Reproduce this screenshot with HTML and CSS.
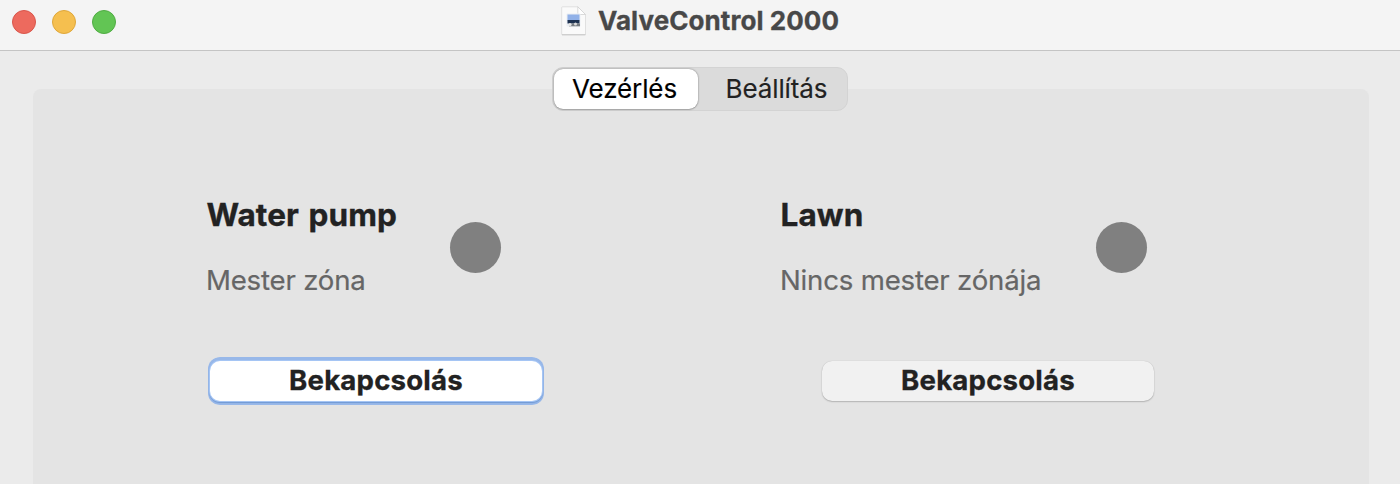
FILE: index.html
```html
<!DOCTYPE html>
<html lang="hu">
<head>
<meta charset="utf-8">
<title>ValveControl 2000</title>
<link rel="stylesheet" href="styles.css">
</head>
<body>
<div class="window">
  <header class="titlebar">
    <div class="lights"><i class="light close"></i><i class="light min"></i><i class="light max"></i></div>
    <div class="title">
      <svg class="doc" width="26" height="30" viewBox="0 0 26 30">
        <path d="M1.5 .8h15.3l7.7 7.7v19.7q0 .8-.8.8H1.5q-.8 0-.8-.8V1.6q0-.8.8-.8z" fill="#fafafa" stroke="#d9d9d9" stroke-width=".8"/>
        <path d="M1 28.7h23.5" stroke="#c8c8c8"/>
        <path d="M16.8.8l7.7 7.7h-6.7q-1 0-1-1z" fill="#fff" stroke="#d0d0d0" stroke-width=".8"/>
        <rect x="5.5" y="7.5" width="14" height="13" rx="1" fill="#e9edf3"/>
        <rect x="6.5" y="8.5" width="12" height="6" fill="#91b1e8"/>
        <path d="M6.5 14h12v3.5h-12z" fill="#1d3150"/>
        <path d="M8 17.5h11v2.8H8z" fill="#777c81"/>
        <circle cx="9" cy="18.5" r="1.6" fill="#e8e8e8"/><circle cx="14.5" cy="18" r="1.5" fill="#dcdcdc"/>
      </svg>
      <span class="name">ValveControl 2000</span>
    </div>
  </header>
  <main class="content">
    <nav class="tabs"><button class="tab active">Vezérlés</button><button class="tab other">Beállítás</button></nav>
    <section class="panel">
      <article class="zone pump">
        <div class="info"><div><h2>Water pump</h2><p>Mester zóna</p></div><i class="status"></i></div>
        <button class="action focused">Bekapcsolás</button>
      </article>
      <article class="zone lawn">
        <div class="info"><div><h2>Lawn</h2><p>Nincs mester zónája</p></div><i class="status"></i></div>
        <button class="action">Bekapcsolás</button>
      </article>
    </section>
  </main>
</div>
</body>
</html>
```
FILE: styles.css
```css
* { box-sizing: border-box; margin: 0; padding: 0; }
body { font-family: Inter, sans-serif; color: #222; overflow: hidden; background: #ebebeb; }
button { font: inherit; color: inherit; border: 0; background: none; white-space: nowrap; }
.window { height: 484px; display: flex; flex-direction: column; }
.titlebar { height: 51px; display: grid; grid-template-columns: 140px 1fr 140px; background: #f4f4f4; border-bottom: 1px solid #c4c4c4; flex: none; }
.lights { display: flex; gap: 16px; padding: 10px 0 0 12px; }
.light { width: 24px; height: 24px; border-radius: 50%; }
.close { background: #ed6a5e; border: 1px solid #d9564b; }
.min { background: #f5bf4f; border: 1px solid #dfa73a; }
.max { background: #62c554; border: 1px solid #50ac43; }
.title { display: flex; justify-content: center; padding-top: 6px; gap: 11px; }
.name { font-size: 26px; font-weight: 700; line-height: 30px; color: #484848; white-space: nowrap; letter-spacing: .07px; -webkit-text-stroke: .3px #484848; }
.content { flex: 1; display: flex; flex-direction: column; align-items: center; padding: 16px 31px 0 33px; }
.tabs { position: relative; z-index: 1; display: flex; width: 296px; height: 44px; margin-right: 2px; border: 1px solid #d3d3d3; border-radius: 11px; background: #dbdbdb; }
.tab { width: 148px; height: 42px; font-size: 26px; line-height: 39px; padding-bottom: 2px; letter-spacing: -.1px; -webkit-text-stroke: .15px; }
.active { width: 144px; height: 40px; margin: 1px; padding-right: 3px; border-radius: 9px; background: #fff; color: #000; line-height: 37px; box-shadow: 0 0 2px #0007, 0 1px 1px #0002; }
.other { padding-left: 7px; }
.panel { width: 100%; flex: 1; margin-top: -22px; background: #e4e4e4; border-radius: 8px 8px 0 0; display: flex; padding: 107px 0 0 173px; }
.zone { width: 574px; }
.info { display: flex; justify-content: space-between; height: 165px; width: 295px; }
.lawn .info { width: 367px; }
h2 { font-size: 31.5px; line-height: 38px; height: 66px; padding-left: .5px; white-space: nowrap; word-spacing: 2px; letter-spacing: .1px; -webkit-text-stroke: .35px; }
p { font-size: 27.6px; line-height: 36px; color: #666; white-space: nowrap; letter-spacing: -.2px; -webkit-text-stroke: .2px; }
.status { width: 51px; height: 51px; margin-top: 26px; border-radius: 50%; background: #808080; }
.action { display: block; width: 332px; height: 40px; margin-left: 4px; padding-bottom: 2px; border-radius: 10px; background: #f1f1f1; box-shadow: 0 0 1px #0003, 0 1px 1.5px #0003; font-size: 27.6px; font-weight: 700; line-height: 36px; letter-spacing: .2px; -webkit-text-stroke: .3px; }
.focused { background: #fff; box-shadow: 0 0 0 1px #a5c5f4, 0 1px 1px 1px #7199d4, 0 0 0 4px #98b8e9; clip-path: inset(-4px -2px round 12px); }
.lawn .action { margin-left: 42px; }
```
